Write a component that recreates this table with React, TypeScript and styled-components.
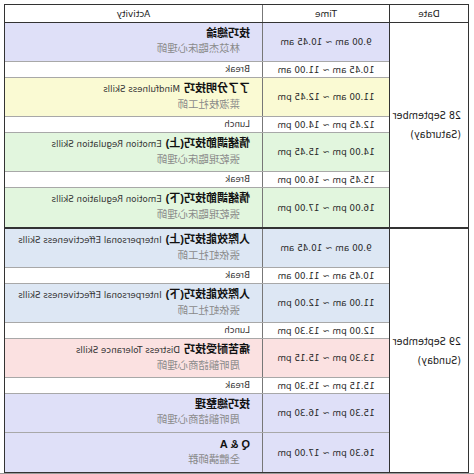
import React from "react";
import styled, { createGlobalStyle } from "styled-components";

const Global = createGlobalStyle`
  html, body { margin: 0; padding: 0; background: #fff; }
  * { box-sizing: border-box; }
`;

const FONT = `"Liberation Sans", "Noto Sans CJK TC", sans-serif`;
const WIDE = `"DejaVu Sans", "Noto Sans CJK TC", sans-serif`;

const Page = styled.div`
  width: 474px;
  height: 474px;
  overflow: hidden;
  transform: scaleX(-1);
  display: flex;
  flex-direction: column;
  padding-top: 4px;
  background: #fff;
  font-family: ${FONT};
  color: #222;
`;

const Table = styled.div`
  margin-left: 5px;
  width: 465px;
  border: 1px solid #333;
  display: flex;
  flex-direction: column;
  background: #fff;
`;

const Footer = styled.div`
  flex: 1;
  background: #9a9a9a;
`;

const HeaderRow = styled.div`
  display: grid;
  grid-template-columns: 79px 127px 1fr;
  height: 18px;
  border-bottom: 1px solid #333;
`;

const HeadCell = styled.div<{ $line?: string }>`
  display: flex;
  align-items: center;
  justify-content: center;
  font-family: ${WIDE};
  font-size: 9px;
  color: #222;
  border-right: ${(p) => (p.$line ? `1px solid ${p.$line}` : "none")};
`;

const DayBlock = styled.div<{ $sep?: boolean }>`
  display: grid;
  grid-template-columns: 79px 1fr;
  border-top: ${(p) => (p.$sep ? "2px solid #333" : "none")};
`;

const DateCell = styled.div`
  border-right: 1px solid #333;
  display: flex;
  flex-direction: column;
  justify-content: center;
  padding-left: 7px;
  font-family: ${WIDE};
  font-size: 9.6px;
  line-height: 19px;
  color: #1a1a1a;
`;

const Rows = styled.div`
  display: flex;
  flex-direction: column;
`;

const Row = styled.div<{ $bg: string; $brk?: boolean; $last?: boolean }>`
  display: grid;
  grid-template-columns: 127px 1fr;
  height: ${(p) => (p.$brk ? "16px" : "39px")};
  background: ${(p) => p.$bg};
  border-bottom: ${(p) => (p.$last ? "none" : "1px solid #a8a8a8")};
`;

const TimeCell = styled.div`
  border-right: 1px solid #777;
  display: flex;
  align-items: center;
  justify-content: center;
  font-family: ${WIDE};
  font-size: 8.8px;
  color: #2a2a2a;
  white-space: nowrap;
`;

const ActivityCell = styled.div`
  display: flex;
  flex-direction: column;
  justify-content: center;
  padding-left: 12px;
  padding-bottom: 2px;
  white-space: nowrap;
`;

const BreakText = styled.span`
  font-family: ${WIDE};
  font-size: 8.6px;
  color: #333;
`;

const Title = styled.div`
  line-height: 16px;
  display: flex;
  align-items: baseline;
`;

const TitleZh = styled.span`
  font-size: 11px;
  font-weight: 700;
  color: #111;
`;

const TitleEn = styled.span`
  font-family: ${WIDE};
  font-size: 8.7px;
  color: #333;
  margin-left: 4px;
`;

const Sub = styled.div`
  font-size: 10.4px;
  line-height: 16px;
  color: #8a8a8a;
  padding-left: 10px;
`;

type Item = {
  time: string;
  zh?: string;
  en?: string;
  sub?: string;
  brk?: string;
  bg: string;
};

const LAV = "#dfe0f8";
const YEL = "#fafad3";
const GRN = "#e2f6de";
const BLU = "#dde7f4";
const PNK = "#fbe1e1";
const WHT = "#ffffff";

const days: { date: string; dow: string; items: Item[] }[] = [
  {
    date: "28 September",
    dow: "(Saturday)",
    items: [
      { time: "9.00 am ~ 10.45 am", zh: "技巧總論", sub: "林苡杰臨床心理師", bg: LAV },
      { time: "10.45 am ~ 11.00 am", brk: "Break", bg: WHT },
      { time: "11.00 am ~ 12.45 pm", zh: "了了分明技巧", en: "Mindfulness Skills", sub: "葉淑枝社工師", bg: YEL },
      { time: "12.45 pm ~ 14.00 pm", brk: "Lunch", bg: WHT },
      { time: "14.00 pm ~ 15.45 pm", zh: "情緒調節技巧(上)", en: "Emotion Regulation Skills", sub: "張乾琨臨床心理師", bg: GRN },
      { time: "15.45 pm ~ 16.00 pm", brk: "Break", bg: WHT },
      { time: "16.00 pm ~ 17.00 pm", zh: "情緒調節技巧(下)", en: "Emotion Regulation Skills", sub: "張乾琨臨床心理師", bg: GRN },
    ],
  },
  {
    date: "29 September",
    dow: "(Sunday)",
    items: [
      { time: "9.00 am ~ 10.45 am", zh: "人際效能技巧(上)", en: "Interpersonal Effectiveness Skills", sub: "張依虹社工師", bg: BLU },
      { time: "10.45 am ~ 11.00 am", brk: "Break", bg: WHT },
      { time: "11.00 am ~ 12.00 pm", zh: "人際效能技巧(下)", en: "Interpersonal Effectiveness Skills", sub: "張依虹社工師", bg: BLU },
      { time: "12.00 pm ~ 13.30 pm", brk: "Lunch", bg: WHT },
      { time: "13.30 pm ~ 15.15 pm", zh: "痛苦耐受技巧", en: "Distress Tolerance Skills", sub: "周昕韻諮商心理師", bg: PNK },
      { time: "15.15 pm ~ 15.30 pm", brk: "Break", bg: WHT },
      { time: "15.30 pm ~ 16.30 pm", zh: "技巧總整理", sub: "周昕韻諮商心理師", bg: LAV },
      { time: "16.30 pm ~ 17.00 pm", zh: "Q & A", sub: "全體講師群", bg: LAV },
    ],
  },
];

export default function App() {
  return (
    <>
      <Global />
      <Page>
        <Table>
          <HeaderRow>
            <HeadCell $line="#333">Date</HeadCell>
            <HeadCell $line="#777">Time</HeadCell>
            <HeadCell>Activity</HeadCell>
          </HeaderRow>
          {days.map((d, di) => (
            <DayBlock key={d.date} $sep={di > 0}>
              <DateCell>
                <span>{d.date}</span>
                <span>{d.dow}</span>
              </DateCell>
              <Rows>
                {d.items.map((it, i) => (
                  <Row
                    key={i}
                    $bg={it.bg}
                    $brk={!!it.brk}
                    $last={i === d.items.length - 1}
                  >
                    <TimeCell>{it.time}</TimeCell>
                    <ActivityCell>
                      {it.brk ? (
                        <BreakText>{it.brk}</BreakText>
                      ) : (
                        <>
                          <Title>
                            <TitleZh>{it.zh}</TitleZh>
                            {it.en && <TitleEn>{it.en}</TitleEn>}
                          </Title>
                          <Sub>{it.sub}</Sub>
                        </>
                      )}
                    </ActivityCell>
                  </Row>
                ))}
              </Rows>
            </DayBlock>
          ))}
        </Table>
        <Footer />
      </Page>
    </>
  );
}
